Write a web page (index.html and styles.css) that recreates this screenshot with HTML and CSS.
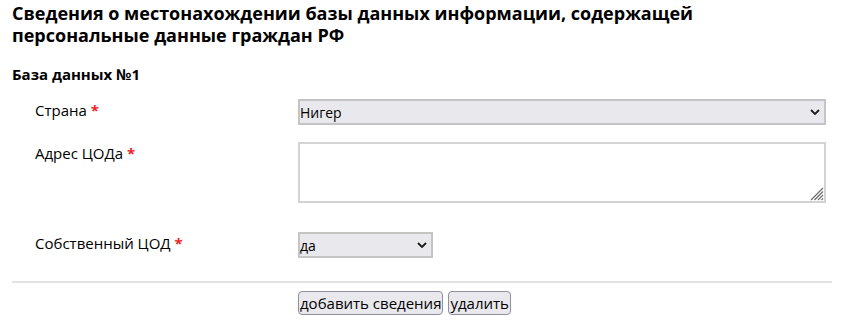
FILE: index.html
```html
<!DOCTYPE html>
<html lang="ru">
<head>
    <meta charset="UTF-8">
    <title>Сведения о местонахождении базы данных</title>
    <link rel="stylesheet" href="styles.css">
</head>
<body>

    <div class="page">
        <h2 class="title">Сведения о местонахождении базы данных информации, содержащей персональные данные граждан РФ</h2>

        <h3 class="db-title">База данных №1</h3>

        <div class="fields">
            <div class="field">
                <label class="field-label">Страна <span class="req">*</span></label>
                <div class="control select-wrap">
                    <select class="select">
                        <option>Нигер</option>
                    </select>
                    <svg class="chevron" width="10" height="6" viewBox="0 0 10 6"><path d="M1 1l4 4 4-4" fill="none" stroke="#1b1b1b" stroke-width="1.8"/></svg>
                </div>
            </div>

            <div class="field field-tall">
                <label class="field-label">Адрес ЦОДа <span class="req">*</span></label>
                <div class="control textarea-wrap">
                    <textarea class="textarea"></textarea>
                    <svg class="grip" width="14" height="14" viewBox="0 0 14 14">
                        <path d="M13 1L1 13M13 4.5L4.5 13M13 8L8 13M13 11.5L11.5 13" stroke="#6b6b6b" stroke-width="1.2"/>
                    </svg>
                </div>
            </div>

            <div class="field">
                <label class="field-label">Собственный ЦОД <span class="req">*</span></label>
                <div class="control">
                    <div class="select-wrap select-small">
                        <select class="select">
                            <option>да</option>
                            <option>нет</option>
                        </select>
                        <svg class="chevron" width="10" height="6" viewBox="0 0 10 6"><path d="M1 1l4 4 4-4" fill="none" stroke="#1b1b1b" stroke-width="1.8"/></svg>
                    </div>
                </div>
            </div>
        </div>

        <hr class="divider">

        <div class="actions">
            <button class="btn" type="button">добавить сведения</button>
            <button class="btn" type="button">удалить</button>
        </div>
    </div>

</body>
</html>
```

FILE: styles.css
```css
/* form page: Open Sans everywhere, native-looking controls */
html, body {
    margin: 0;
    background: #fff;
}

body {
    font-family: 'Open Sans', 'Noto Sans', sans-serif;
    font-size: 15px;
    color: #000;
}

.page {
    padding: 2px 12px 0 12px;
}

.title {
    font-size: 18px;
    line-height: 22px;
    font-weight: 700;
    margin: 0;
    width: 760px;
}

.db-title {
    font-size: 15px;
    line-height: 20px;
    font-weight: 700;
    margin: 18px 0 15px;
}

.fields {
    padding-left: 23px;
    padding-right: 6px;
}

.field {
    display: grid;
    grid-template-columns: 263px 1fr;
    margin-bottom: 17px;
}

.field-tall {
    margin-bottom: 29px;
}

.field-label {
    line-height: 20px;
    padding-top: 1px;
}

.req {
    color: #ee1c25;
    font-weight: 700;
}

.select-wrap,
.textarea-wrap {
    position: relative;
}

.select-small {
    width: 135px;
}

.select {
    appearance: none;
    -webkit-appearance: none;
    display: block;
    width: 100%;
    height: 26px;
    margin: 0;
    padding: 0 24px 0 0;
    font-family: inherit;
    font-size: 14px;
    color: #000;
    background: #e9e9ed;
    border: 2px solid #c4c4c4;
    border-radius: 0;
}

.chevron {
    position: absolute;
    right: 6px;
    top: 10px;
    pointer-events: none;
}

.textarea {
    display: block;
    width: 100%;
    height: 61px;
    box-sizing: border-box;
    margin: 0;
    font-family: inherit;
    font-size: 14px;
    border: 2px solid #d3d3d3;
    background: #fff;
    resize: none;
}

.grip {
    position: absolute;
    right: 2px;
    bottom: 2px;
    pointer-events: none;
}

.divider {
    border: 0;
    border-top: 2px solid #e2e2e2;
    margin: 0;
    margin-top: 23px;
}

.actions {
    display: flex;
    gap: 5px;
    padding-left: 286px;
    margin-top: 8px;
}

.btn {
    font: inherit;
    color: #000;
    height: 24px;
    padding: 0 1px;
    line-height: 20px;
    background: #e9e9ed;
    border: 1px solid #8f8f9d;
    border-radius: 4px;
}
```
